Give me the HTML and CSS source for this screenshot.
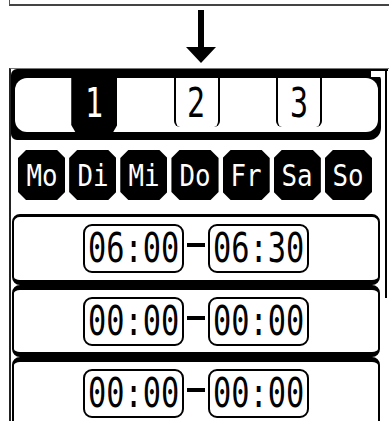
FILE: index.html
```html
<!DOCTYPE html>
<html lang="de">
<head>
<meta charset="utf-8">
<title>Zeitplan</title>
<link rel="stylesheet" href="styles.css">
</head>
<body>
<div class="top-box"></div>
<div class="arrow-wrap">
  <svg class="arrow" width="30" height="53" viewBox="0 0 30 53">
    <rect x="12" y="0" width="6" height="38" fill="#000"/>
    <polygon points="0,37 30,37 15,53" fill="#000"/>
  </svg>
</div>
<div class="lcd">
  <div class="tabbar">
    <div class="strip">
      <div class="seg"></div>
      <div class="tab active"><span class="tab-label">1</span></div>
      <div class="seg"></div>
      <div class="tab plain"><span class="tab-label">2</span></div>
      <div class="seg"></div>
      <div class="tab plain"><span class="tab-label">3</span></div>
      <div class="seg"></div>
    </div>
  </div>
  <div class="days">
    <div class="day"><span>Mo</span></div>
    <div class="day"><span>Di</span></div>
    <div class="day"><span>Mi</span></div>
    <div class="day"><span>Do</span></div>
    <div class="day"><span>Fr</span></div>
    <div class="day"><span>Sa</span></div>
    <div class="day"><span>So</span></div>
  </div>
  <div class="rows">
    <div class="row">
      <div class="time"><span>06:00</span></div>
      <div class="dash"></div>
      <div class="time"><span>06:30</span></div>
    </div>
    <div class="row">
      <div class="time"><span>00:00</span></div>
      <div class="dash"></div>
      <div class="time"><span>00:00</span></div>
    </div>
    <div class="row">
      <div class="time"><span>00:00</span></div>
      <div class="dash"></div>
      <div class="time"><span>00:00</span></div>
    </div>
  </div>
  <div class="scroll-cap"></div>
  <div class="scroll"></div>
</div>
</body>
</html>
```
FILE: styles.css
```css
html, body {
  margin: 0;
  height: 421px;
  overflow: hidden;
  background: #fff;
}
body {
  font-family: "DejaVu Sans Mono", monospace;
}
.top-box {
  margin-left: 9px;
  height: 4px;
  border-left: 1px solid #555;
  border-bottom: 2px solid #444;
}
.arrow-wrap {
  display: flex;
  padding-left: 186px;
  margin-top: 4px;
  height: 53px;
}
.arrow {
  display: block;
}
.lcd {
  position: relative;
  margin-left: 9px;
  margin-top: 5px;
  border-top: 1px solid #777;
  border-left: 2px solid #222;
  height: 400px;
}
.tabbar {
  width: 370px;
  height: 71px;
  box-sizing: border-box;
  padding: 9px 3px 8px 4px;
  background: #000;
  border-radius: 6px 12px 12px 6px;
}
.strip {
  display: flex;
  height: 54px;
  background: #fff;
  border-radius: 12px;
}
.seg {
  flex: 1;
}
.tab {
  width: 46px;
  display: flex;
  justify-content: center;
  align-items: center;
  box-sizing: border-box;
}
.tab.active {
  background: #000;
  color: #fff;
  padding-bottom: 4px;
  clip-path: polygon(0 0, 100% 0, 100% calc(100% - 7px), calc(100% - 4px) 100%, 4px 100%, 0 calc(100% - 7px));
}
.tab.plain {
  height: 49px;
  color: #000;
  border-left: 2px solid #000;
  border-right: 2px solid #000;
  border-radius: 0 0 6px 6px;
}
.tab-label {
  display: inline-block;
  font-size: 40px;
  line-height: 1;
  transform: scaleX(0.75);
}
.days {
  display: grid;
  grid-template-columns: repeat(7, 1fr);
  gap: 4px;
  width: 354px;
  height: 50px;
  margin: 10px 0 0 7px;
}
.day {
  background: #000;
  color: #fff;
  display: flex;
  justify-content: center;
  align-items: center;
  padding-top: 2px;
  box-sizing: border-box;
  clip-path: polygon(8px 0, calc(100% - 8px) 0, 100% 8px, 100% calc(100% - 8px), calc(100% - 8px) 100%, 8px 100%, 0 calc(100% - 8px), 0 8px);
}
.day span {
  display: inline-block;
  font-size: 30px;
  line-height: 1;
  transform: scaleX(0.86);
}
.rows {
  margin: 14px 0 0 1px;
  width: 368px;
}
.row {
  box-sizing: border-box;
  height: 72px;
  border: 2px solid #000;
  border-top-width: 5px;
  border-bottom-width: 5px;
  border-radius: 8px;
  display: flex;
  justify-content: center;
  align-items: center;
  gap: 3px;
}
.row:first-child {
  height: 71px;
  border-top-width: 3px;
}
.time {
  width: 101px;
  height: 49px;
  box-sizing: border-box;
  border: 2px solid #000;
  border-radius: 9px;
  display: flex;
  justify-content: center;
  align-items: center;
}
.time span {
  display: inline-block;
  font-size: 41px;
  line-height: 1;
  transform: scaleX(0.74);
  color: #000;
}
.dash {
  width: 18px;
  height: 4px;
  background: #000;
  margin-bottom: 7px;
}
.scroll-cap {
  position: absolute;
  left: 358px;
  top: 0;
  width: 19px;
  height: 8px;
  box-sizing: border-box;
  background: #fff;
  border-top: 2px solid #000;
  border-left: 2px solid #000;
}
.scroll {
  position: absolute;
  left: 374px;
  top: 0;
  width: 2px;
  height: 229px;
  background: #000;
}
```
